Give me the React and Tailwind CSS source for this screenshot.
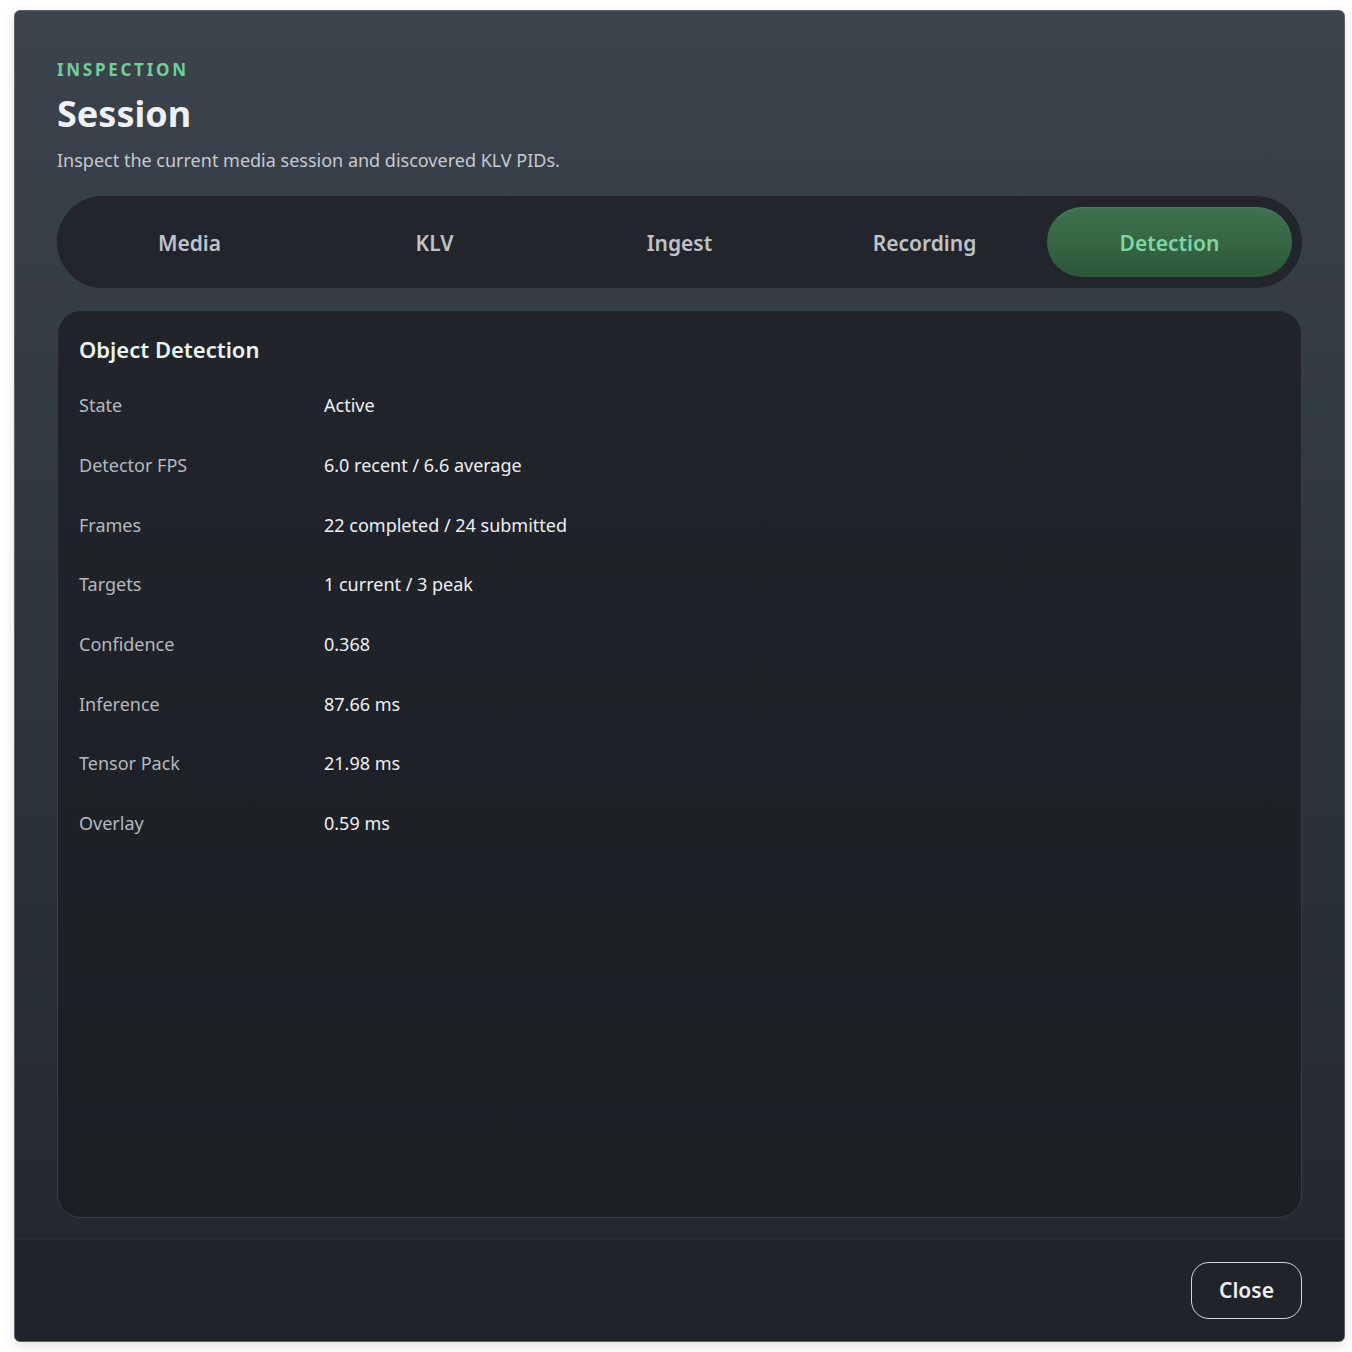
import { useState } from "react";

const tabs = ["Media", "KLV", "Ingest", "Recording", "Detection"];

const rows = [
  ["State", "Active"],
  ["Detector FPS", "6.0 recent / 6.6 average"],
  ["Frames", "22 completed / 24 submitted"],
  ["Targets", "1 current / 3 peak"],
  ["Confidence", "0.368"],
  ["Inference", "87.66 ms"],
  ["Tensor Pack", "21.98 ms"],
  ["Overlay", "0.59 ms"],
];

export default function App() {
  const [active, setActive] = useState("Detection");

  return (
    <div className="min-h-[1352px] bg-white pl-[14px] pr-[8px] pt-[10px] font-['Noto_Sans',sans-serif]">
      <div className="flex h-[1332px] w-[1331px] flex-col overflow-hidden rounded-[6px] border border-[#59636e] bg-gradient-to-b from-[#3b434d] via-[#2d343b] to-[#22272d] shadow-[0_4px_14px_rgba(0,0,0,0.12)]">
        <div className="flex flex-1 flex-col px-[42px] pb-[21px] pt-[47px]">
          <p className="text-[17px] font-bold leading-[24px] tracking-[0.16em] text-[#6fcf98]">INSPECTION</p>
          <h1 className="mt-[10px] text-[36px] font-bold leading-[44px] text-[#eef0f3]">Session</h1>
          <p className="mt-[11px] text-[18px] leading-[26px] text-[#c5cad0]">
            Inspect the current media session and discovered KLV PIDs.
          </p>

          <div className="mt-[23px] grid grid-cols-5 rounded-full bg-[#22262c] px-[10px] py-[11px]">
            {tabs.map((t) => (
              <button
                key={t}
                onClick={() => setActive(t)}
                className={`h-[70px] rounded-full pt-[3px] text-[21px] font-semibold ${
                  active === t
                    ? "bg-gradient-to-b from-[#3f7450] to-[#2c5738] text-[#7fd6a2] shadow-[inset_0_1px_0_rgba(255,255,255,0.06)]"
                    : "text-[#bfc3c8]"
                }`}
              >
                {t}
              </button>
            ))}
          </div>

          <div className="mt-[22px] flex-1 rounded-[24px] border border-[#2e4236] bg-gradient-to-b from-[#21252b] to-[#1b1e23] px-[21px] pt-[22px]">
            <h2 className="text-[22px] font-semibold leading-[32px] text-[#e9f5ee]">Object Detection</h2>
            <div className="mt-[11px] flex flex-col">
              {rows.map(([label, value]) => (
                <div key={label} className="flex h-[59.7px] items-center">
                  <span className="w-[245px] text-[18px] text-[#b4b9bf]">{label}</span>
                  <span className="text-[18px] text-[#eef0f2]">{value}</span>
                </div>
              ))}
            </div>
          </div>
        </div>

        <div className="flex h-[102px] items-center justify-end border-t border-[#2b3036] bg-[#20242a] px-[42px]">
          <button className="h-[57px] w-[111px] rounded-[18px] border border-[#d3d7dc] text-[21px] font-semibold text-[#eceef1]">
            Close
          </button>
        </div>
      </div>
    </div>
  );
}
